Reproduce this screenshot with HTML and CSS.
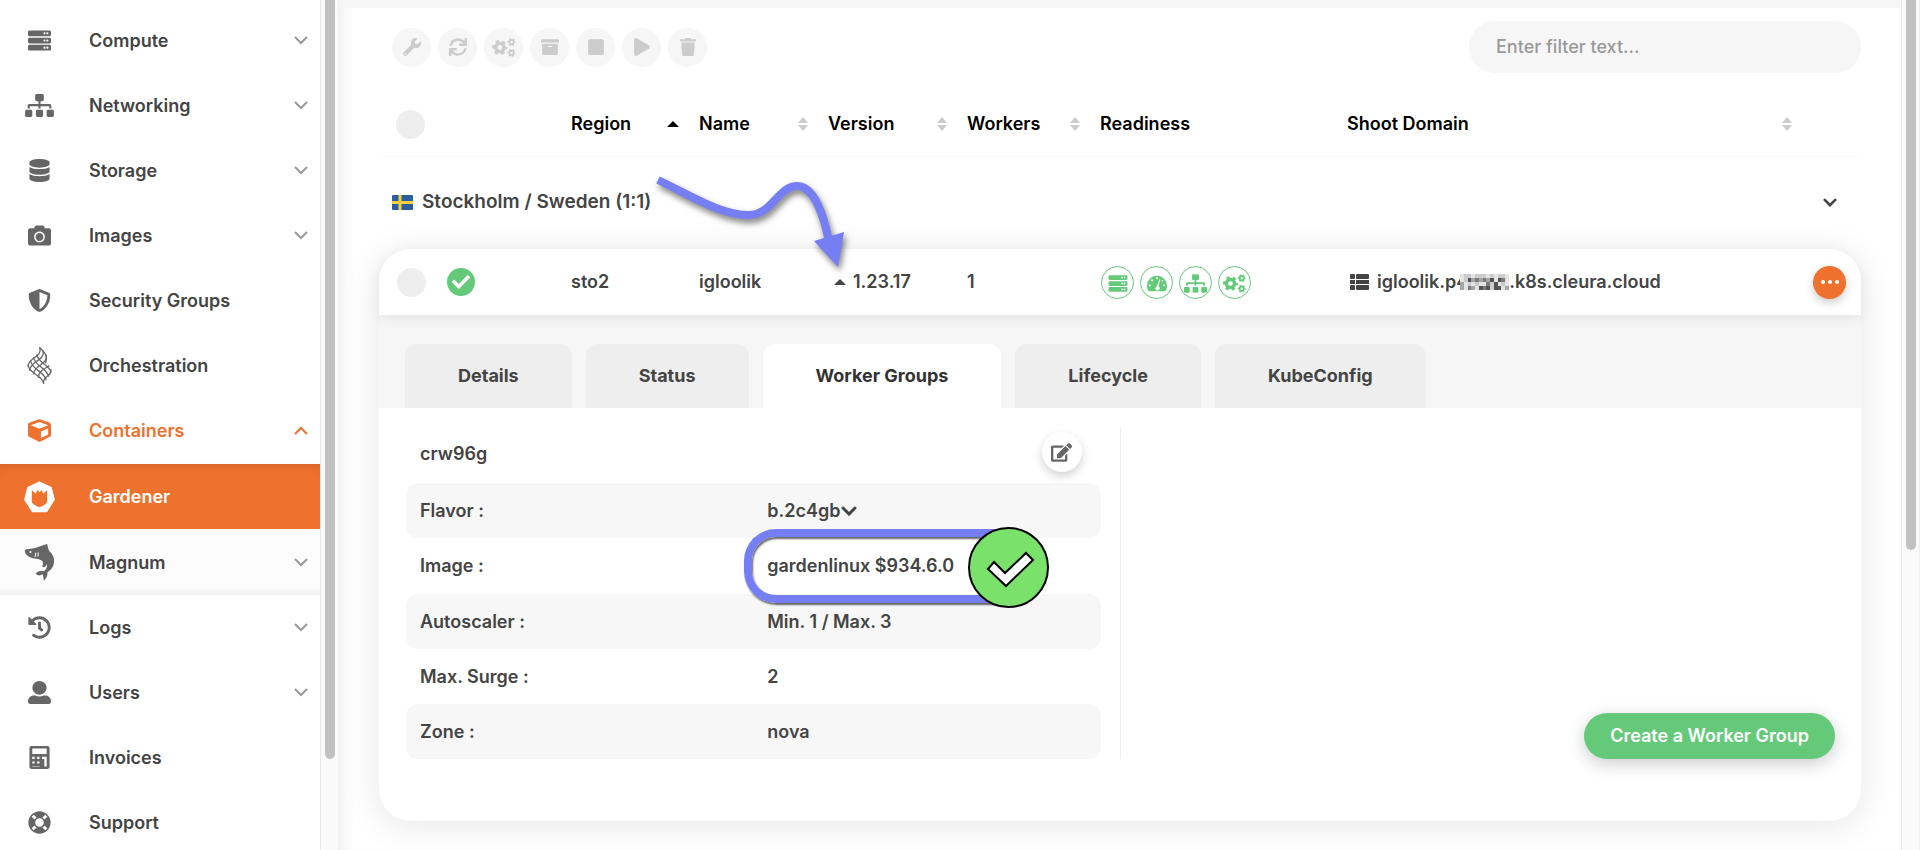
FILE: index.html
```html
<!DOCTYPE html>
<html lang="en">
<head>
<meta charset="utf-8">
<title>Gardener shoots</title>
<link rel="stylesheet" href="styles.css">
</head>
<body>
<svg class="sprite" aria-hidden="true">
  <symbol id="server" viewBox="0 0 512 512"><path d="M480 160H32c-17.673 0-32-14.327-32-32V64c0-17.673 14.327-32 32-32h448c17.673 0 32 14.327 32 32v64c0 17.673-14.327 32-32 32zm-48-88c-13.255 0-24 10.745-24 24s10.745 24 24 24 24-10.745 24-24-10.745-24-24-24zm-64 0c-13.255 0-24 10.745-24 24s10.745 24 24 24 24-10.745 24-24-10.745-24-24-24zm112 248H32c-17.673 0-32-14.327-32-32v-64c0-17.673 14.327-32 32-32h448c17.673 0 32 14.327 32 32v64c0 17.673-14.327 32-32 32zm-48-88c-13.255 0-24 10.745-24 24s10.745 24 24 24 24-10.745 24-24-10.745-24-24-24zm-64 0c-13.255 0-24 10.745-24 24s10.745 24 24 24 24-10.745 24-24-10.745-24-24-24zm112 248H32c-17.673 0-32-14.327-32-32v-64c0-17.673 14.327-32 32-32h448c17.673 0 32 14.327 32 32v64c0 17.673-14.327 32-32 32zm-48-88c-13.255 0-24 10.745-24 24s10.745 24 24 24 24-10.745 24-24-10.745-24-24-24zm-64 0c-13.255 0-24 10.745-24 24s10.745 24 24 24 24-10.745 24-24-10.745-24-24-24z"/></symbol>
  <symbol id="sitemap" viewBox="0 0 640 512"><path d="M128 352H32c-17.67 0-32 14.33-32 32v96c0 17.67 14.33 32 32 32h96c17.67 0 32-14.33 32-32v-96c0-17.67-14.33-32-32-32zm-24-80h192v48h48v-48h192v48h48v-57.59c0-21.17-17.23-38.41-38.41-38.41H344v-64h40c17.67 0 32-14.33 32-32V32c0-17.67-14.33-32-32-32H256c-17.67 0-32 14.33-32 32v96c0 17.67 14.33 32 32 32h40v64H94.41C73.23 224 56 241.23 56 262.41V320h48v-48zm264 80h-96c-17.67 0-32 14.33-32 32v96c0 17.67 14.33 32 32 32h96c17.67 0 32-14.33 32-32v-96c0-17.67-14.33-32-32-32zm240 0h-96c-17.67 0-32 14.33-32 32v96c0 17.67 14.33 32 32 32h96c17.67 0 32-14.33 32-32v-96c0-17.67-14.33-32-32-32z"/></symbol>
  <symbol id="database" viewBox="0 0 448 512"><path d="M448 73.143v45.714C448 159.143 347.667 192 224 192S0 159.143 0 118.857V73.143C0 32.857 100.333 0 224 0s224 32.857 224 73.143zM448 176v102.857C448 319.143 347.667 352 224 352S0 319.143 0 278.857V176c48.125 33.143 136.208 48.572 224 48.572S399.874 209.143 448 176zm0 160v102.857C448 479.143 347.667 512 224 512S0 479.143 0 438.857V336c48.125 33.143 136.208 48.572 224 48.572S399.874 369.143 448 336z"/></symbol>
  <symbol id="camera" viewBox="0 0 512 512"><path d="M512 144v288c0 26.5-21.5 48-48 48H48c-26.5 0-48-21.5-48-48V144c0-26.5 21.5-48 48-48h88l12.3-32.9c7-18.7 24.9-31.1 44.9-31.1h125.5c20 0 37.9 12.4 44.9 31.1L376 96h88c26.5 0 48 21.5 48 48zM376 288c0-66.2-53.8-120-120-120s-120 53.8-120 120 53.8 120 120 120 120-53.8 120-120zm-32 0c0 48.5-39.5 88-88 88s-88-39.5-88-88 39.5-88 88-88 88 39.5 88 88z"/></symbol>
  <symbol id="shield" viewBox="0 0 512 512"><path d="M466.5 83.7l-192-80a48.15 48.15 0 0 0-36.9 0l-192 80C27.7 91.1 16 108.6 16 128c0 198.5 114.5 335.7 221.5 380.3 11.8 4.9 25.1 4.9 36.9 0C360.1 472.6 496 349.3 496 128c0-19.4-11.7-36.9-29.5-44.3zM256.1 446.3l-.1-381 175.9 73.3c-3.3 151.4-82.1 261.1-175.8 307.7z"/></symbol>
  <symbol id="weave" viewBox="0 0 74 114"><g fill="none" stroke="currentColor" stroke-width="4" stroke-linecap="round"><path d="M2 56C3 80 46 88 50 112M10 43C12 68 54 78 57 101M19 33C22 56 60 66 65 90M29 24C30 46 68 56 72 76M38 2C62 24 60 34 56 48"/><path d="M2 60C0 34 46 32 38 2M7 72C6 46 54 42 48 13M19 83C18 58 66 52 57 25M34 93C32 72 58 66 66 58M49 110C48 88 76 92 72 70"/></g></symbol>
  <symbol id="cube" viewBox="0 0 512 512"><path d="M239.1 6.3l-208 78c-18.7 7-31.1 25-31.1 45v225.1c0 18.2 10.3 34.8 26.5 42.9l208 104c13.5 6.8 29.4 6.8 42.9 0l208-104c16.3-8.1 26.5-24.8 26.5-42.9V129.3c0-20-12.4-37.9-31.1-44.9l-208-78C262 2.2 250 2.2 239.1 6.3zM256 68.4l192 72v1.1l-192 78-192-78v-1.1l192-72zm32 356V275.5l160-65v133.9l-160 80z"/></symbol>
  <symbol id="gardener" viewBox="0 0 96 96"><path fill="currentColor" stroke="currentColor" stroke-width="4" stroke-linejoin="round" d="M48 3 83 20 92 56 69 92H27L4 56 13 20Z"/><path class="tulip" d="M25 28 37 38 41 27 48 34 55 27 59 38 71 28V62C71 68 58 75 48 79 38 75 25 68 25 62Z"/></symbol>
  <symbol id="shark" viewBox="0 0 86 106"><path fill-rule="evenodd" d="M1 20C1 14 10 15 22 13 38 11 48 4 65 0 67 7 67 13 71 20 83 30 88 46 83 60 80 70 74 76 66 80 67 90 62 99 55 105 54 98 55 92 51 87 44 92 38 90 32 85 38 77 48 77 55 78 62 74 66 66 64 57 60 66 55 69 51 64 52 60 56 57 50 48 46 44 40 43 33 42 20 41 10 36 5 30 2 26 1 23 1 20ZM17 20a3 3 0 1 0 .1 0ZM31 25 29 37H32L34 25ZM38 24 37 36H40L41 24Z"/></symbol>
  <symbol id="history" viewBox="0 0 512 512"><path d="M504 255.531c.253 136.64-111.18 248.372-247.82 248.468-59.015.042-113.223-20.53-155.822-54.911-11.077-8.94-11.905-25.541-1.839-35.607l11.267-11.267c8.609-8.609 22.353-9.551 31.891-1.984C173.062 425.135 212.781 440 256 440c101.705 0 184-82.311 184-184 0-101.705-82.311-184-184-184-48.814 0-93.149 18.969-126.068 49.932l50.754 50.754c10.08 10.08 2.941 27.314-11.313 27.314H24c-8.837 0-16-7.163-16-16V38.627c0-14.254 17.234-21.393 27.314-11.314l49.372 49.372C129.209 34.136 189.552 8 256 8c136.81 0 247.747 110.78 248 247.531zm-180.912 78.784l9.823-12.63c8.138-10.463 6.253-25.542-4.21-33.679L288 256.349V152c0-13.255-10.745-24-24-24h-16c-13.255 0-24 10.745-24 24v135.651l65.409 50.874c10.463 8.137 25.541 6.253 33.679-4.21z"/></symbol>
  <symbol id="user" viewBox="0 0 512 512"><path d="M256 304c88 0 158-68 158-152S344 0 256 0 98 68 98 152s70 152 158 152zm128 16h-36c-28 16-60 24-92 24s-64-8-92-24h-36C57 320 0 377 0 448v16c0 26.5 21.5 48 48 48h416c26.5 0 48-21.5 48-48v-16c0-71-57-128-128-128z"/></symbol>
  <symbol id="calculator" viewBox="0 0 448 512"><path fill-rule="evenodd" d="M48 0H400C427 0 448 21 448 48V464C448 491 427 512 400 512H48C21 512 0 491 0 464V48C0 21 21 0 48 0ZM64 56V176H384V56ZM64 240V288H116V240ZM172 240V288H224V240ZM280 240V288H332V240ZM64 344V392H116V344ZM172 344V392H224V344ZM64 448V464H224V448ZM332 288V456H384V240H332Z"/></symbol>
  <symbol id="ring" viewBox="0 0 512 512"><path d="M256 8C119.033 8 8 119.033 8 256s111.033 248 248 248 248-111.033 248-248S392.967 8 256 8zm173.696 119.559l-63.399 63.399c-10.987-18.559-26.67-34.252-45.255-45.255l63.399-63.399a218.396 218.396 0 0 1 45.255 45.255zM256 352c-53.019 0-96-42.981-96-96s42.981-96 96-96 96 42.981 96 96-42.981 96-96 96zM127.559 82.304l63.399 63.399c-18.559 10.987-34.252 26.67-45.255 45.255l-63.399-63.399a218.372 218.372 0 0 1 45.255-45.255zM82.304 384.441l63.399-63.399c10.987 18.559 26.67 34.252 45.255 45.255l-63.399 63.399a218.396 218.396 0 0 1-45.255-45.255zm302.137 45.255l-63.399-63.399c18.559-10.987 34.252-26.67 45.255-45.255l63.399 63.399a218.403 218.403 0 0 1-45.255 45.255z"/></symbol>
  <symbol id="wrench" viewBox="0 0 512 512"><path d="M507.73 109.1c-2.24-9.03-13.54-12.09-20.12-5.51l-74.36 74.36-67.88-11.31-11.31-67.88 74.36-74.36c6.62-6.62 3.43-17.9-5.66-20.16-47.38-11.74-99.55.91-136.58 37.93-39.64 39.64-50.55 97.1-34.05 147.2L18.74 402.76c-24.99 24.99-24.99 65.51 0 90.5 24.99 24.99 65.51 24.99 90.5 0l213.21-213.21c50.12 16.71 107.47 5.68 147.37-34.22 37.07-37.07 49.7-89.32 37.91-136.73zM64 472c-13.25 0-24-10.75-24-24 0-13.26 10.75-24 24-24s24 10.74 24 24c0 13.25-10.75 24-24 24z"/></symbol>
  <symbol id="sync" viewBox="0 0 512 512"><path d="M440.65 12.57l4 82.77A247.16 247.16 0 0 0 255.83 8C134.73 8 33.91 94.92 12.29 209.82A12 12 0 0 0 24.09 224h49.05a12 12 0 0 0 11.67-9.26 175.91 175.91 0 0 1 317-56.94l-101.46-4.86a12 12 0 0 0-12.57 12v47.41a12 12 0 0 0 12 12H500a12 12 0 0 0 12-12V12a12 12 0 0 0-12-12h-47.37a12 12 0 0 0-11.98 12.57zM255.83 432a175.61 175.61 0 0 1-146-77.8l101.8 4.87a12 12 0 0 0 12.57-12v-47.4a12 12 0 0 0-12-12H12a12 12 0 0 0-12 12V500a12 12 0 0 0 12 12h47.35a12 12 0 0 0 12-12.6l-4.15-82.57A247.17 247.17 0 0 0 255.83 504c121.11 0 221.93-86.92 243.55-201.82a12 12 0 0 0-11.8-14.18h-49.05a12 12 0 0 0-11.67 9.26A175.86 175.86 0 0 1 255.83 432z"/></symbol>
  <symbol id="cogs" viewBox="0 0 640 512"><g fill="none" stroke="currentColor"><circle cx="208" cy="256" r="112" stroke-width="92"/><circle cx="208" cy="256" r="176" stroke-width="60" pathLength="6" stroke-dasharray=".5 .5" stroke-dashoffset=".25"/><circle cx="522" cy="110" r="58" stroke-width="50"/><circle cx="522" cy="110" r="93" stroke-width="34" pathLength="6" stroke-dasharray=".5 .5" stroke-dashoffset=".25"/><circle cx="522" cy="402" r="58" stroke-width="50"/><circle cx="522" cy="402" r="93" stroke-width="34" pathLength="6" stroke-dasharray=".5 .5" stroke-dashoffset=".25"/></g></symbol>
  <symbol id="archive" viewBox="0 0 512 512"><path d="M32 448c0 17.7 14.3 32 32 32h384c17.7 0 32-14.3 32-32V160H32v288zm160-212c0-6.6 5.4-12 12-12h104c6.6 0 12 5.4 12 12v8c0 6.6-5.4 12-12 12H204c-6.6 0-12-5.4-12-12v-8zM480 32H32C14.3 32 0 46.3 0 64v48c0 8.8 7.2 16 16 16h480c8.8 0 16-7.2 16-16V64c0-17.7-14.3-32-32-32z"/></symbol>
  <symbol id="stop" viewBox="0 0 448 512"><path d="M400 32H48C21.5 32 0 53.5 0 80v352c0 26.5 21.5 48 48 48h352c26.5 0 48-21.5 48-48V80c0-26.5-21.5-48-48-48z"/></symbol>
  <symbol id="play" viewBox="0 0 448 512"><path d="M424.4 214.7L72.4 6.6C43.8-10.3 0 6.1 0 47.9V464c0 37.5 40.7 60.1 72.4 41.3l352-208c31.4-18.5 31.5-64.1 0-82.6z"/></symbol>
  <symbol id="trash" viewBox="0 0 448 512"><path d="M432 32H312l-9.4-18.7A24 24 0 0 0 281.1 0H166.8a23.72 23.72 0 0 0-21.4 13.3L136 32H16A16 16 0 0 0 0 48v32a16 16 0 0 0 16 16h416a16 16 0 0 0 16-16V48a16 16 0 0 0-16-16zM53.2 467a48 48 0 0 0 47.9 45h245.8a48 48 0 0 0 47.9-45L416 128H32z"/></symbol>
  <symbol id="check" viewBox="0 0 512 512"><path d="M173.898 439.404l-166.4-166.4c-9.997-9.997-9.997-26.206 0-36.204l36.203-36.204c9.997-9.998 26.207-9.998 36.204 0L192 312.69 432.095 72.596c9.997-9.997 26.207-9.997 36.204 0l36.203 36.204c9.997 9.997 9.997 26.206 0 36.204l-294.4 294.401c-9.998 9.997-26.207 9.997-36.204-.001z"/></symbol>
  <symbol id="gauge" viewBox="0 0 576 512"><path fill-rule="evenodd" d="M288 32C129 32 0 161 0 320c0 53 14 102 39 145 6 10 16 15 27 15H510c11 0 21-5 27-15 25-43 39-92 39-145C576 161 447 32 288 32ZM288 72a30 30 0 1 1-.1 0ZM144 132a30 30 0 1 1-.1 0ZM82 274a30 30 0 1 1-.1 0ZM494 274a30 30 0 1 1-.1 0ZM446 146a28 28 0 0 1 14 38 30 30 0 0 1-40 8 30 30 0 0 1 26-46ZM358 130 380 138 330 342A62 62 0 1 1 288 338Z"/></symbol>
  <symbol id="list" viewBox="0 0 19 16"><rect width="5" height="5" rx="1"/><rect x="6" width="13" height="5" rx="1"/><rect y="6" width="5" height="4"/><rect x="6" y="6" width="13" height="4"/><rect y="11" width="5" height="5" rx="1"/><rect x="6" y="11" width="13" height="5" rx="1"/></symbol>
  <symbol id="edit" viewBox="0 0 576 512"><path d="M402.6 83.2l90.2 90.2c3.8 3.8 3.8 10 0 13.8L274.4 405.6l-92.8 10.3c-12.4 1.4-22.9-9.1-21.5-21.5l10.3-92.8L388.8 83.2c3.8-3.8 10-3.8 13.8 0zm162-22.9l-48.8-48.8c-15.2-15.2-39.9-15.2-55.2 0l-35.4 35.4c-3.8 3.8-3.8 10 0 13.8l90.2 90.2c3.8 3.8 10 3.8 13.8 0l35.4-35.4c15.2-15.3 15.2-40 0-55.2zM384 346.2V448H64V128h229.8c3.2 0 6.2-1.3 8.5-3.5l40-40c7.6-7.6 2.2-20.5-8.5-20.5H48C21.5 64 0 85.5 0 112v352c0 26.5 21.5 48 48 48h352c26.5 0 48-21.5 48-48V306.2c0-10.7-12.9-16-20.5-8.5l-40 40c-2.2 2.3-3.5 5.3-3.5 8.5z"/></symbol>
  <symbol id="down" viewBox="0 0 14 9"><path d="M1 1 7 7 13 1" fill="none" stroke="currentColor" stroke-width="2"/></symbol>
  <symbol id="down-bold" viewBox="0 0 16 10"><path d="M2 2 8 8 14 2" fill="none" stroke="currentColor" stroke-width="3" stroke-linecap="round"/></symbol>
  <symbol id="up" viewBox="0 0 14 9"><path d="M1 8 7 2 13 8" fill="none" stroke="currentColor" stroke-width="2"/></symbol>
  <symbol id="sort" viewBox="0 0 10 14"><path d="M5 0 10 6H0ZM5 14 0 8H10Z"/></symbol>
  <symbol id="caret" viewBox="0 0 12 6"><path d="M6 0 12 6H0Z"/></symbol>
</svg>

<div class="app">
  <nav class="sidebar" aria-label="Main">
    <ul class="menu">
      <li><a class="item" href="#"><svg class="icon"><use href="#server"/></svg><span>Compute</span><svg class="chev"><use href="#down"/></svg></a></li>
      <li><a class="item" href="#"><svg class="icon"><use href="#sitemap"/></svg><span>Networking</span><svg class="chev"><use href="#down"/></svg></a></li>
      <li><a class="item" href="#"><svg class="icon"><use href="#database"/></svg><span>Storage</span><svg class="chev"><use href="#down"/></svg></a></li>
      <li><a class="item" href="#"><svg class="icon"><use href="#camera"/></svg><span>Images</span><svg class="chev"><use href="#down"/></svg></a></li>
      <li><a class="item" href="#"><svg class="icon"><use href="#shield"/></svg><span>Security Groups</span></a></li>
      <li><a class="item" href="#"><svg class="icon tall"><use href="#weave"/></svg><span>Orchestration</span></a></li>
      <li>
        <a class="item open" href="#"><svg class="icon"><use href="#cube"/></svg><span>Containers</span><svg class="chev"><use href="#up"/></svg></a>
        <ul class="submenu">
          <li><a class="item active" href="#"><svg class="icon large"><use href="#gardener"/></svg><span>Gardener</span></a></li>
          <li><a class="item last" href="#"><svg class="icon tall"><use href="#shark"/></svg><span>Magnum</span><svg class="chev"><use href="#down"/></svg></a></li>
        </ul>
      </li>
      <li><a class="item" href="#"><svg class="icon"><use href="#history"/></svg><span>Logs</span><svg class="chev"><use href="#down"/></svg></a></li>
      <li><a class="item" href="#"><svg class="icon"><use href="#user"/></svg><span>Users</span><svg class="chev"><use href="#down"/></svg></a></li>
      <li><a class="item" href="#"><svg class="icon"><use href="#calculator"/></svg><span>Invoices</span></a></li>
      <li><a class="item" href="#"><svg class="icon"><use href="#ring"/></svg><span>Support</span></a></li>
    </ul>
  </nav>
  <div class="scrollbar"><div class="thumb side-thumb"></div></div>

  <main class="main">
    <div class="toolbar">
      <div class="actions">
        <button class="tool" aria-label="Maintain"><svg><use href="#wrench"/></svg></button>
        <button class="tool" aria-label="Refresh"><svg><use href="#sync"/></svg></button>
        <button class="tool" aria-label="Configure"><svg class="tool-wide"><use href="#cogs"/></svg></button>
        <button class="tool" aria-label="Archive"><svg><use href="#archive"/></svg></button>
        <button class="tool" aria-label="Stop"><svg><use href="#stop"/></svg></button>
        <button class="tool" aria-label="Start"><svg><use href="#play"/></svg></button>
        <button class="tool" aria-label="Delete"><svg><use href="#trash"/></svg></button>
      </div>
      <input class="filter" type="text" placeholder="Enter filter text..." aria-label="Filter">
    </div>

    <table class="shoots">
      <thead>
        <tr class="cols head">
          <th class="select"><input class="round" type="checkbox" aria-label="Select all"></th>
          <th></th>
          <th>Region<svg class="caret"><use href="#caret"/></svg></th>
          <th>Name<svg class="sort"><use href="#sort"/></svg></th>
          <th>Version<svg class="sort"><use href="#sort"/></svg></th>
          <th>Workers<svg class="sort"><use href="#sort"/></svg></th>
          <th>Readiness</th>
          <th>Shoot Domain<svg class="sort"><use href="#sort"/></svg></th>
          <th></th>
        </tr>
      </thead>
      <tbody>
        <tr class="group">
          <td class="place">
            <svg class="flag" viewBox="0 0 21 15"><rect width="21" height="15" rx="1" fill="#2b5f9e"/><path d="M0 7.5H21M8 0V15" stroke="#f7cf3c" stroke-width="3"/></svg>
            <span>Stockholm / Sweden (1:1)</span>
          </td>
          <td><button class="plain" aria-label="Collapse region"><svg class="fold"><use href="#down-bold"/></svg></button></td>
        </tr>
      </tbody>
      <tbody class="card">
        <tr class="cols shoot">
          <td class="select"><input class="round" type="checkbox" aria-label="Select igloolik"></td>
          <td><span class="ok"><svg><use href="#check"/></svg></span></td>
          <td>sto2</td>
          <td>igloolik</td>
          <td class="version"><svg class="caret"><use href="#caret"/></svg>1.23.17
            <svg class="pointer" viewBox="0 0 240 150"><path d="M18 20C52 36 80 55 109 55 132 55 138 26 157 26 174 26 184 56 189 82" fill="none" stroke="#767ef4" stroke-width="8"/><path d="M174 81 204 72 198 107Z" fill="#767ef4"/></svg>
          </td>
          <td>1</td>
          <td class="states">
            <span class="state"><svg><use href="#server"/></svg></span>
            <span class="state"><svg><use href="#gauge"/></svg></span>
            <span class="state"><svg class="state-wide"><use href="#sitemap"/></svg></span>
            <span class="state"><svg class="state-wide"><use href="#cogs"/></svg></span>
          </td>
          <td class="domain"><svg class="list"><use href="#list"/></svg><span>igloolik.p4</span><svg class="mosaic" viewBox="0 0 13 4" preserveAspectRatio="none" shape-rendering="crispEdges"><rect width="13" height="4" fill="#e4e4e4"/><path fill="#cbcbcb" d="M1 0h2v1h-2zM4 0h2v1h-2zM6 0h1v1h-1zM8 0h1v1h-1zM10 0h2v1h-2zM1 1h1v1h-1zM2 2h1v1h-1zM4 2h1v1h-1zM8 2h1v1h-1zM8 3h1v1h-1zM11 2h1v1h-1z"/><path fill="#a5a5a5" d="M3 1h1v1h-1zM5 1h1v1h-1zM7 1h1v1h-1zM0 2h1v2h-1zM3 3h1v1h-1zM12 3h1v1h-1z"/><path fill="#7c7c7c" d="M4 1h1v1h-1zM6 1h1v1h-1zM11 1h1v1h-1zM7 2h1v1h-1zM2 3h1v1h-1zM6 3h1v1h-1z"/><path fill="#535353" d="M2 1h1v1h-1zM8 1h1v1h-1zM10 1h1v1h-1zM9 2h1v2h-1zM5 3h1v1h-1zM7 3h1v1h-1zM10 3h1v1h-1z"/></svg><span>.k8s.cleura.cloud</span></td>
          <td><button class="more" aria-label="More actions"><svg viewBox="0 0 18 4"><circle cx="2" cy="2" r="2"/><circle cx="9" cy="2" r="2"/><circle cx="16" cy="2" r="2"/></svg></button></td>
        </tr>
        <tr class="expanded">
          <td>
            <div class="tabs" role="tablist">
              <button class="tab" role="tab">Details</button>
              <button class="tab" role="tab">Status</button>
              <button class="tab current" role="tab" aria-selected="true">Worker Groups</button>
              <button class="tab" role="tab">Lifecycle</button>
              <button class="tab" role="tab">KubeConfig</button>
            </div>
            <div class="panel">
              <section class="workers">
                <header class="worker-head"><span>crw96g</span><button class="edit" aria-label="Edit worker group"><svg><use href="#edit"/></svg></button></header>
                <dl class="facts">
                  <div><dt>Flavor :</dt><dd><button class="plain flavor">b.2c4gb<svg class="fold"><use href="#down-bold"/></svg></button></dd></div>
                  <div><dt>Image :</dt><dd class="image">gardenlinux $934.6.0<span class="outline"></span><svg class="badge" viewBox="0 0 81 81"><circle cx="40.5" cy="40.5" r="39.5" fill="#7ae16b" stroke="#000" stroke-width="2"/><path d="M20 42 26 35 37 46 58 26 65 33 38 59Z" fill="#fff" stroke="#000" stroke-width="2"/></svg></dd></div>
                  <div><dt>Autoscaler :</dt><dd>Min. 1 / Max. 3</dd></div>
                  <div><dt>Max. Surge :</dt><dd>2</dd></div>
                  <div><dt>Zone :</dt><dd>nova</dd></div>
                </dl>
              </section>
              <div class="create-area"><button class="create">Create a Worker Group</button></div>
            </div>
          </td>
        </tr>
      </tbody>
    </table>
  </main>
  <div class="scrollbar page"><div class="thumb page-thumb"></div></div>
</div>
</body>
</html>
```
FILE: styles.css
```css
* { box-sizing: border-box; }

body {
  margin: 0;
  background: #fff;
  color: #444;
  font: 600 18px/24px Inter, "Liberation Sans", sans-serif;
}

svg { display: block; flex: none; fill: currentColor; }
.sprite { position: absolute; width: 0; height: 0; }
button, input { font: inherit; color: inherit; margin: 0; }
button { border: 0; padding: 0; background: none; cursor: pointer; }
ul, dl, dd { margin: 0; padding: 0; list-style: none; }

.app { display: flex; height: 100vh; overflow: hidden; }

/* Sidebar */
.sidebar { flex: 0 0 320px; overflow: hidden; }
.menu { padding-top: 8px; }
.item {
  display: flex;
  align-items: center;
  height: 65px;
  padding-right: 12px;
  color: #444;
  text-decoration: none;
}
.item .icon { width: 79px; height: 23px; margin-right: 10px; color: #666; }
.item .icon.tall { height: 37px; }
.item .icon.large { height: 32px; color: #fff; }
.item span { flex: 1; }
.chev { width: 14px; height: 9px; color: #999; }
.item.open, .item.open .icon, .item.open .chev { color: #ee712e; }
.submenu > li { padding-top: 1px; }
.submenu { background: #fcfcfc; }
.item.active { background: #ee712e; color: #fff; box-shadow: inset 0 8px 8px -6px rgba(0, 0, 0, .12); }
.item.last { box-shadow: inset 0 -10px 10px -8px rgba(0, 0, 0, .08); }
.tulip { fill: #ee712e; }

/* Scrollbars */
.scrollbar {
  flex: 0 0 19px;
  padding: 0 3px 0 4px;
  border-left: 1px solid #e8e8e8;
  border-right: 1px solid #efefef;
  background: #fafafa;
}
.thumb { background: #c1c1c1; border-radius: 0 0 6px 6px; }
.side-thumb { height: 759px; }
.page-thumb { height: 550px; }

/* Main area */
.main {
  flex: 1;
  min-width: 0;
  border-top: 8px solid #f6f6f6;
  padding: 13px 40px 26px;
  box-shadow: inset 14px 0 14px -10px rgba(0, 0, 0, .07);
}
.toolbar { display: flex; align-items: center; justify-content: space-between; padding-left: 13px; }
.actions { display: flex; gap: 7px; }
.tool {
  display: grid;
  place-items: center;
  width: 39px;
  height: 39px;
  border-radius: 50%;
  background: #f6f6f6;
  color: #ccc;
}
.tool svg { width: 18px; height: 18px; }
.tool .tool-wide { width: 24px; height: 19px; }
.filter {
  width: 392px;
  height: 52px;
  padding: 0 27px 2px;
  border: 0;
  border-radius: 26px;
  background: #f6f6f6;
  font-weight: 500;
}
.filter::placeholder { color: #999; opacity: 1; }

/* Shoot table */
.shoots, .shoots thead, .shoots tbody { display: block; }
.cols {
  display: grid;
  grid-template-columns: 64px 128px 128px 129px 139px 133px 247px minmax(0, 1fr) 49px;
  align-items: center;
}
.shoots { margin-top: 19px; }
.shoots th, .shoots td { padding: 0; text-align: left; font-weight: 600; }
.head { height: 65px; border-bottom: 1px solid #fafafa; color: #000; }
.shoots .head th { display: flex; align-items: center; justify-content: space-between; padding-right: 20px; }
.shoots .head .select { padding: 0 0 0 17px; }
.shoots .shoot .select { padding-left: 18px; }
.round {
  display: block;
  appearance: none;
  width: 29px;
  height: 29px;
  border-radius: 50%;
  background: #eee;
}
.sort { width: 10px; height: 14px; color: #ccc; }
.caret { width: 12px; height: 6px; }

.group { display: flex; align-items: center; justify-content: space-between; height: 92px; padding: 0 24px 2px 13px; }
.place { display: flex; align-items: center; gap: 9px; font-size: 19px; }
.flag { width: 21px; height: 15px; }
.plain { display: flex; align-items: center; }
.fold { width: 16px; height: 10px; }
.group .fold { width: 14px; height: 9px; }

.card {
  border-radius: 32px;
  background: #fff;
  box-shadow: 0 4px 36px rgba(0, 0, 0, .1);
}
.shoot {
  position: relative;
  z-index: 1;
  height: 66px;
  border-radius: 32px 32px 0 0;
  background: #fff;
  box-shadow: 0 4px 14px rgba(0, 0, 0, .07);
}
.ok {
  display: grid;
  place-items: center;
  width: 28px;
  height: 28px;
  margin-left: 4px;
  border-radius: 50%;
  background: #65c97a;
  color: #fff;
}
.ok svg { width: 18px; height: 18px; }
.version { position: relative; display: flex; align-items: center; gap: 7px; }
.shoots .version { padding-left: 6px; }
.pointer {
  position: absolute;
  left: -188px;
  top: -110px;
  width: 240px;
  height: 150px;
  pointer-events: none;
  filter: drop-shadow(2px 4px 3px rgba(0, 0, 0, .5));
}
.states { display: flex; gap: 6px; }
.shoots .states { padding-left: 1px; }
.state {
  display: grid;
  place-items: center;
  width: 33px;
  height: 33px;
  padding-top: 3px;
  border: 1px solid #65c97a;
  border-radius: 50%;
  color: #65c97a;
}
.state svg { width: 20px; height: 19px; }
.state .state-wide { width: 23px; height: 19px; }
.domain { display: flex; align-items: center; }
.list { width: 19px; height: 16px; margin: 0 8px 0 3px; }
.mosaic { width: 49px; height: 16px; margin-left: -8px; }
.more {
  display: grid;
  place-items: center;
  width: 33px;
  height: 33px;
  margin-left: 1px;
  border-radius: 50%;
  background: #ee712e;
  color: #fff;
  box-shadow: 0 4px 8px rgba(0, 0, 0, .2);
}
.more svg { width: 18px; height: 4px; }

/* Expanded shoot */
.expanded, .expanded > td { display: block; }
.tabs { display: flex; gap: 14px; padding: 29px 26px 0; background: #f6f6f6; }
.tab {
  height: 64px;
  padding: 0 53px;
  border-radius: 12px 12px 0 0;
  background: #eee;
  font-weight: 700;
}
.tab.current { background: #fff; color: #333; }
.panel { display: grid; grid-template-columns: 1fr 1fr; padding: 19px 26px 62px 27px; }
.workers { padding-right: 19px; border-right: 1px solid #eee; }
.worker-head { display: flex; align-items: center; justify-content: space-between; height: 56px; padding: 0 19px 2px 14px; }
.edit {
  display: grid;
  place-items: center;
  width: 40px;
  height: 40px;
  margin-bottom: 4px;
  border-radius: 50%;
  background: #fff;
  color: #666;
  box-shadow: 0 4px 10px rgba(0, 0, 0, .18);
}
.edit svg { width: 21px; height: 19px; }
.facts > div {
  display: grid;
  grid-template-columns: 1fr 1fr;
  align-items: center;
  min-height: 55px;
  border-radius: 12px;
}
.facts > div:nth-child(2) { min-height: 56px; }
.facts > div:nth-child(odd) { background: #f7f7f7; }
.facts dt, .facts dd { padding-left: 14px; }
.flavor { gap: 1px; }
.image { position: relative; }
.outline {
  position: absolute;
  left: -9px;
  top: -25px;
  width: 256px;
  height: 74px;
  border: 8px solid #767ef4;
  border-right: 0;
  border-radius: 32px 0 0 32px;
  box-shadow: 1px 2px 2px rgba(0, 0, 0, .6), inset 1px 2px 2px rgba(0, 0, 0, .6);
}
.badge { position: absolute; left: 215px; top: -27px; width: 81px; height: 81px; }
.create-area { display: flex; align-items: flex-end; justify-content: flex-end; }
.create {
  height: 46px;
  padding: 0 26px;
  border-radius: 23px;
  background: #65c97a;
  color: #fff;
  box-shadow: 0 5px 18px rgba(0, 0, 0, .2);
}
```
